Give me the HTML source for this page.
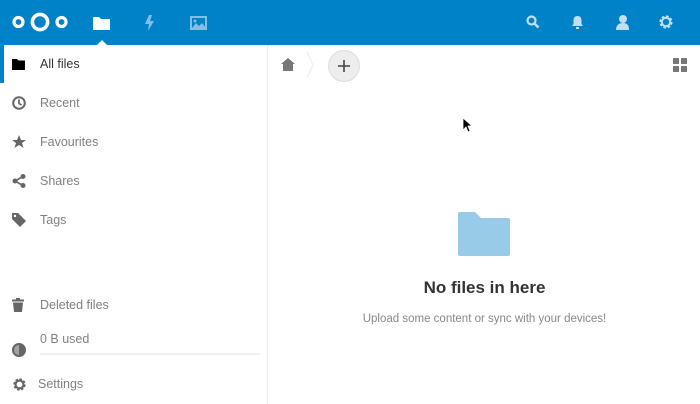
<!DOCTYPE html>
<html><head><meta charset="utf-8"><style>
*{margin:0;padding:0;box-sizing:border-box}
body{width:700px;height:404px;overflow:hidden;background:#fff;font-family:"Liberation Sans",sans-serif;position:relative}
#hdr{position:absolute;left:0;top:0;width:700px;height:45px;background:#0082c9}
#side{position:absolute;left:4px;top:45px;width:264px;height:359px;background:#fff;border-right:1px solid #eee}
#strip{position:absolute;left:0;top:45px;width:4px;height:38px;background:#0082c9}
.it{position:absolute;left:0;height:38px;display:flex;align-items:center;font-size:12.5px;color:#808080}
.it svg{position:absolute;left:8px}
.it span{position:absolute;left:36px;white-space:nowrap}
.ic{position:absolute}
</style></head><body>
<div id="hdr">
<svg class="ic" style="left:12px;top:11px" width="56" height="22" viewBox="0 0 56 22"><circle cx="6.5" cy="11" r="4.5" fill="none" stroke="#fff" stroke-width="3.2"/><circle cx="28" cy="11" r="7.6" fill="none" stroke="#fff" stroke-width="3.6"/><circle cx="49.5" cy="11" r="4.5" fill="none" stroke="#fff" stroke-width="3.2"/></svg>
<svg class="ic" style="left:93px;top:16px" width="17" height="14" viewBox="0 0 17 14"><path d="M0 1h6l2 2h9v11H0z" fill="#fff"/></svg>
<svg class="ic" style="left:96px;top:40px" width="12" height="6" viewBox="0 0 12 6"><path d="M0 6L6 0 12 6z" fill="#fff"/></svg>
<svg class="ic" style="left:144px;top:15px" width="11" height="16" viewBox="0 0 11 16"><path d="M5 0L1 9h4l-1 7 6-10H6l2-6z" fill="#7fc0e4"/></svg>
<svg class="ic" style="left:190px;top:16px" width="17" height="14" viewBox="0 0 17 14"><rect x="1" y="1" width="15" height="12" fill="none" stroke="#7fc0e4" stroke-width="2"/><path d="M2 12l4-5 3 3 3-3 4 5z" fill="#7fc0e4"/><circle cx="5" cy="5" r="1.5" fill="#7fc0e4"/></svg>
<svg class="ic" style="left:526px;top:15px" width="14" height="14" viewBox="0 0 14 14"><circle cx="5.5" cy="5.5" r="4" fill="none" stroke="#bfe0f2" stroke-width="2.2"/><path d="M8.5 8.5l4 4" stroke="#bfe0f2" stroke-width="2.6"/></svg>
<svg class="ic" style="left:572px;top:16px" width="11" height="13" viewBox="0 0 11 13"><path d="M5.5 0c3 0 4 2 4 5v3l1.5 2H0l1.5-2V5c0-3 1-5 4-5zM4 11h3v2H4z" fill="#bfe0f2"/></svg>
<svg class="ic" style="left:615px;top:14px" width="14" height="16" viewBox="0 0 14 16"><circle cx="8" cy="5" r="4" fill="#bfe0f2"/><path d="M1 16c0-5 3-7 7-7s6 2 6 7z" fill="#bfe0f2"/></svg>
<svg class="ic" style="left:658px;top:14px" width="16" height="16" viewBox="0 0 16 16"><circle cx="8" cy="8" r="5" fill="none" stroke="#bfe0f2" stroke-width="3.2" stroke-dasharray="2.4 1.5"/><circle cx="8" cy="8" r="4.2" fill="none" stroke="#bfe0f2" stroke-width="2"/></svg>
</div>
<div id="strip"></div>
<div id="side">
<div class="it" style="top:0;color:#333"><svg width="13" height="11" viewBox="0 0 13 11"><path d="M0 0h5l1.5 1.5H13V11H0z" fill="#000"/></svg><span>All files</span></div>
<div class="it" style="top:39px"><svg width="14" height="14" viewBox="0 0 14 14"><circle cx="7" cy="7" r="5.8" fill="none" stroke="#666" stroke-width="2"/><path d="M7 3.5V7.5l2.5 1.5" fill="none" stroke="#666" stroke-width="1.8"/></svg><span>Recent</span></div>
<div class="it" style="top:78px"><svg width="14" height="14" viewBox="0 0 14 14"><path d="M7 0l2 5h5l-4 3 1.6 5L7 10l-4.6 3L4 8 0 5h5z" fill="#666"/></svg><span>Favourites</span></div>
<div class="it" style="top:117px"><svg width="14" height="14" viewBox="0 0 14 14"><circle cx="3" cy="7" r="2.5" fill="#666"/><circle cx="11" cy="2.5" r="2.5" fill="#666"/><circle cx="11" cy="11.5" r="2.5" fill="#666"/><path d="M3 7l8-4.5M3 7l8 4.5" stroke="#666" stroke-width="1.6"/></svg><span>Shares</span></div>
<div class="it" style="top:156px"><svg width="14" height="14" viewBox="0 0 14 14"><path d="M0 0h6l8 8-6 6-8-8z" fill="#666"/><circle cx="3" cy="3" r="1.2" fill="#fff"/></svg><span>Tags</span></div>
<div class="it" style="top:241px"><svg width="12" height="14" viewBox="0 0 12 14"><path d="M0 1.5h12v2H0zM4 0h4v2H4zM1 4.5h10l-1 9.5H2z" fill="#666"/></svg><span>Deleted files</span></div>
<div class="it" style="top:280px;height:40px"><svg width="14" height="14" viewBox="0 0 14 14" style="top:18px"><circle cx="7" cy="7" r="6" fill="none" stroke="#666" stroke-width="2"/><path d="M7 1a6 6 0 0 1 0 12z" fill="#666"/><path d="M7 1a6 6 0 0 0 0 12" fill="#666" opacity=".6"/></svg><span style="top:7px">0 B used</span><div style="position:absolute;left:36px;top:28px;width:220px;height:2px;background:#f0f0f0"></div></div>
<div class="it" style="top:320px"><svg width="15" height="15" viewBox="0 0 16 16"><circle cx="8" cy="8" r="5" fill="none" stroke="#666" stroke-width="3.2" stroke-dasharray="2.4 1.5"/><circle cx="8" cy="8" r="4.2" fill="none" stroke="#666" stroke-width="2.2"/></svg><span style="left:34px">Settings</span></div>
</div>
<svg class="ic" style="left:281px;top:58px" width="14" height="13" viewBox="0 0 14 13"><path d="M7 0l7 6h-2v7H2V6H0z" fill="#777"/></svg>
<svg class="ic" style="left:306px;top:52px" width="8" height="26" viewBox="0 0 8 26"><path d="M1 0l6 13-6 13" fill="none" stroke="#eee" stroke-width="1.2"/></svg>
<div style="position:absolute;left:328px;top:50px;width:32px;height:32px;border-radius:50%;background:#ededed;border:1px solid #ddd"></div>
<svg class="ic" style="left:338px;top:60px" width="12" height="12" viewBox="0 0 12 12"><path d="M6 0v12M0 6h12" stroke="#444" stroke-width="1.6"/></svg>
<svg class="ic" style="left:673px;top:58px" width="14" height="14" viewBox="0 0 14 14" fill="#777"><rect width="6" height="6"/><rect x="8" width="6" height="6"/><rect y="8" width="6" height="6"/><rect x="8" y="8" width="6" height="6"/></svg>
<svg class="ic" style="left:462px;top:118px" width="10" height="15" viewBox="0 0 10 15"><path d="M1 0v12l3-3 2 5 2-1-2-5h4z" fill="#000" stroke="#fff" stroke-width=".8"/></svg>
<svg class="ic" style="left:458px;top:212px" width="52" height="44" viewBox="0 0 52 44"><path d="M0 2a2 2 0 0 1 2-2h15l6 6h27a2 2 0 0 1 2 2v34a2 2 0 0 1-2 2H2a2 2 0 0 1-2-2z" fill="#97cbe7"/></svg>
<div style="position:absolute;left:269px;width:431px;top:278px;text-align:center;font-size:17px;font-weight:bold;color:#333">No files in here</div>
<div style="position:absolute;left:269px;width:431px;top:313px;text-align:center;font-size:11.5px;color:#888">Upload some content or sync with your devices!</div>
</body></html>
